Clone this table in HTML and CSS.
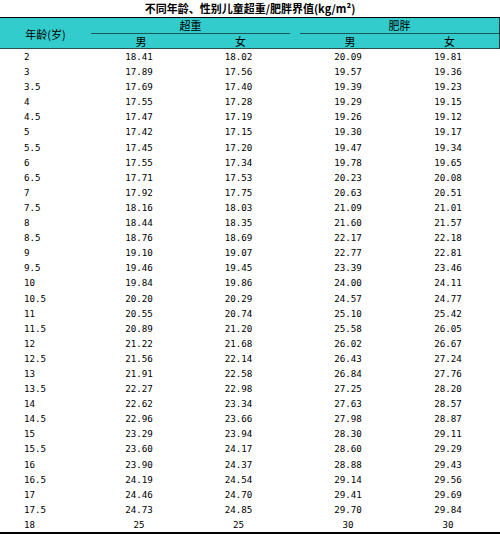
FILE: index.html
```html
<!DOCTYPE html>
<html lang="zh">
<head>
<meta charset="utf-8">
<link rel="stylesheet" href="styles.css">
</head>
<body>
<div class="sheet">
  <div class="title">不同年龄、性别儿童超重/肥胖界值(kg/m²)</div>
  <div class="head">
    <div class="h-age">年龄(岁)</div>
    <div class="h-group h-over">超重</div>
    <div class="h-gap"></div>
    <div class="h-group h-obese">肥胖</div>
    <div class="h-sex">男</div>
    <div class="h-sex">女</div>
    <div class="h-sex h-gap2"></div>
    <div class="h-sex">男</div>
    <div class="h-sex">女</div>
  </div>
  <div class="body">
    <div class="row"><span class="age">2</span><span class="num">18.41</span><span class="num">18.02</span><span></span><span class="num">20.09</span><span class="num">19.81</span></div>
    <div class="row"><span class="age">3</span><span class="num">17.89</span><span class="num">17.56</span><span></span><span class="num">19.57</span><span class="num">19.36</span></div>
    <div class="row"><span class="age">3.5</span><span class="num">17.69</span><span class="num">17.40</span><span></span><span class="num">19.39</span><span class="num">19.23</span></div>
    <div class="row"><span class="age">4</span><span class="num">17.55</span><span class="num">17.28</span><span></span><span class="num">19.29</span><span class="num">19.15</span></div>
    <div class="row"><span class="age">4.5</span><span class="num">17.47</span><span class="num">17.19</span><span></span><span class="num">19.26</span><span class="num">19.12</span></div>
    <div class="row"><span class="age">5</span><span class="num">17.42</span><span class="num">17.15</span><span></span><span class="num">19.30</span><span class="num">19.17</span></div>
    <div class="row"><span class="age">5.5</span><span class="num">17.45</span><span class="num">17.20</span><span></span><span class="num">19.47</span><span class="num">19.34</span></div>
    <div class="row"><span class="age">6</span><span class="num">17.55</span><span class="num">17.34</span><span></span><span class="num">19.78</span><span class="num">19.65</span></div>
    <div class="row"><span class="age">6.5</span><span class="num">17.71</span><span class="num">17.53</span><span></span><span class="num">20.23</span><span class="num">20.08</span></div>
    <div class="row"><span class="age">7</span><span class="num">17.92</span><span class="num">17.75</span><span></span><span class="num">20.63</span><span class="num">20.51</span></div>
    <div class="row"><span class="age">7.5</span><span class="num">18.16</span><span class="num">18.03</span><span></span><span class="num">21.09</span><span class="num">21.01</span></div>
    <div class="row"><span class="age">8</span><span class="num">18.44</span><span class="num">18.35</span><span></span><span class="num">21.60</span><span class="num">21.57</span></div>
    <div class="row"><span class="age">8.5</span><span class="num">18.76</span><span class="num">18.69</span><span></span><span class="num">22.17</span><span class="num">22.18</span></div>
    <div class="row"><span class="age">9</span><span class="num">19.10</span><span class="num">19.07</span><span></span><span class="num">22.77</span><span class="num">22.81</span></div>
    <div class="row"><span class="age">9.5</span><span class="num">19.46</span><span class="num">19.45</span><span></span><span class="num">23.39</span><span class="num">23.46</span></div>
    <div class="row"><span class="age">10</span><span class="num">19.84</span><span class="num">19.86</span><span></span><span class="num">24.00</span><span class="num">24.11</span></div>
    <div class="row"><span class="age">10.5</span><span class="num">20.20</span><span class="num">20.29</span><span></span><span class="num">24.57</span><span class="num">24.77</span></div>
    <div class="row"><span class="age">11</span><span class="num">20.55</span><span class="num">20.74</span><span></span><span class="num">25.10</span><span class="num">25.42</span></div>
    <div class="row"><span class="age">11.5</span><span class="num">20.89</span><span class="num">21.20</span><span></span><span class="num">25.58</span><span class="num">26.05</span></div>
    <div class="row"><span class="age">12</span><span class="num">21.22</span><span class="num">21.68</span><span></span><span class="num">26.02</span><span class="num">26.67</span></div>
    <div class="row"><span class="age">12.5</span><span class="num">21.56</span><span class="num">22.14</span><span></span><span class="num">26.43</span><span class="num">27.24</span></div>
    <div class="row"><span class="age">13</span><span class="num">21.91</span><span class="num">22.58</span><span></span><span class="num">26.84</span><span class="num">27.76</span></div>
    <div class="row"><span class="age">13.5</span><span class="num">22.27</span><span class="num">22.98</span><span></span><span class="num">27.25</span><span class="num">28.20</span></div>
    <div class="row"><span class="age">14</span><span class="num">22.62</span><span class="num">23.34</span><span></span><span class="num">27.63</span><span class="num">28.57</span></div>
    <div class="row"><span class="age">14.5</span><span class="num">22.96</span><span class="num">23.66</span><span></span><span class="num">27.98</span><span class="num">28.87</span></div>
    <div class="row"><span class="age">15</span><span class="num">23.29</span><span class="num">23.94</span><span></span><span class="num">28.30</span><span class="num">29.11</span></div>
    <div class="row"><span class="age">15.5</span><span class="num">23.60</span><span class="num">24.17</span><span></span><span class="num">28.60</span><span class="num">29.29</span></div>
    <div class="row"><span class="age">16</span><span class="num">23.90</span><span class="num">24.37</span><span></span><span class="num">28.88</span><span class="num">29.43</span></div>
    <div class="row"><span class="age">16.5</span><span class="num">24.19</span><span class="num">24.54</span><span></span><span class="num">29.14</span><span class="num">29.56</span></div>
    <div class="row"><span class="age">17</span><span class="num">24.46</span><span class="num">24.70</span><span></span><span class="num">29.41</span><span class="num">29.69</span></div>
    <div class="row"><span class="age">17.5</span><span class="num">24.73</span><span class="num">24.85</span><span></span><span class="num">29.70</span><span class="num">29.84</span></div>
    <div class="row"><span class="age">18</span><span class="num">25</span><span class="num">25</span><span></span><span class="num">30</span><span class="num">30</span></div>
  </div>
</div>
</body>
</html>
```

FILE: styles.css
```css
html, body {
  margin: 0;
  padding: 0;
  background: #ffffff;
}

.sheet {
  width: 500px;
  font-family: "Noto Sans CJK SC", "DejaVu Sans", sans-serif;
  color: #000;
}

.title {
  height: 17px;
  line-height: 17px;
  text-align: center;
  font-size: 11px;
  font-weight: bold;
}

.head {
  display: grid;
  grid-template-columns: 91px 100px 99px 10px 100px 99px;
  grid-template-rows: 16px 14px;
  background: #33cccc;
  border-top: 1px solid #000;
  border-bottom: 1px solid #2b4f4f;
  border-right: 1px solid #1d3b3b;
  font-size: 11px;
}

.h-age {
  grid-row: 1 / span 2;
  display: flex;
  align-items: center;
  justify-content: center;
  padding-top: 2px;
}

.h-group {
  text-align: center;
  line-height: 15px;
  border-bottom: 1px solid #1e5656;
}

.h-over {
  grid-column: 2 / span 2;
}

.h-gap {
  grid-column: 4;
}

.h-obese {
  grid-column: 5 / span 2;
}

.h-sex {
  text-align: center;
  line-height: 15px;
}

.body {
  border-bottom: 2px solid #000;
}

.row {
  display: grid;
  grid-template-columns: 91px 100px 99px 10px 100px 100px;
  height: 15.1px;
  line-height: 15.1px;
  font-family: "DejaVu Sans Mono", "Liberation Mono", monospace;
  font-size: 9.2px;
}

.age {
  padding-left: 24px;
}

.num {
  text-align: center;
  padding-right: 4px;
}
```
